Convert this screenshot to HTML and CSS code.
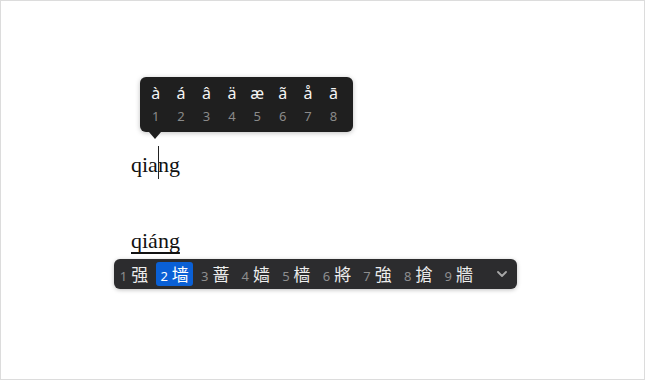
FILE: index.html
```html
<!DOCTYPE html>
<html lang="zh">
<head>
   <meta charset="UTF-8">
   <meta name="viewport" content="width=device-width, initial-scale=1">
   <link rel="stylesheet" href="styles.css">
   <title>Pinyin</title>
</head>

<body>

   <div class="janela">

      <!-- acentos -->
      <div class="acentos">
         <div class="tecla"><span class="letra">à</span><span class="num">1</span></div>
         <div class="tecla"><span class="letra">á</span><span class="num">2</span></div>
         <div class="tecla"><span class="letra">â</span><span class="num">3</span></div>
         <div class="tecla"><span class="letra">ä</span><span class="num">4</span></div>
         <div class="tecla"><span class="letra">æ</span><span class="num">5</span></div>
         <div class="tecla"><span class="letra">ã</span><span class="num">6</span></div>
         <div class="tecla"><span class="letra">å</span><span class="num">7</span></div>
         <div class="tecla"><span class="letra">ā</span><span class="num">8</span></div>
      </div>

      <div class="palavra">qia<span class="cursor"></span>ng</div>

      <div class="palavra marcada"><span>qiáng</span></div>

      <!-- candidatos -->
      <div class="candidatos">
         <div class="item"><span class="num">1</span><span class="hanzi">强</span></div>
         <div class="item ativo"><span class="num">2</span><span class="hanzi">墙</span></div>
         <div class="item"><span class="num">3</span><span class="hanzi">蔷</span></div>
         <div class="item"><span class="num">4</span><span class="hanzi">嫱</span></div>
         <div class="item"><span class="num">5</span><span class="hanzi">樯</span></div>
         <div class="item"><span class="num">6</span><span class="hanzi">將</span></div>
         <div class="item"><span class="num">7</span><span class="hanzi">強</span></div>
         <div class="item"><span class="num">8</span><span class="hanzi">搶</span></div>
         <div class="item"><span class="num">9</span><span class="hanzi">牆</span></div>

         <svg class="seta" width="10" height="6" viewBox="0 0 10 6">
            <path d="M1 1 L5 5 L9 1" fill="none" stroke="#a8a8a8" stroke-width="1.8" stroke-linecap="round" stroke-linejoin="round"/>
         </svg>
      </div>

   </div>

</body>
</html>
```

FILE: styles.css
```css
* {
   margin:0;
   padding:0;
   box-sizing:border-box;
}

body {
   background:#fff;
   width:645px;
   height:380px;
   font-family:"Noto Sans", "Liberation Sans", sans-serif;
}

.janela {
   height:380px;
   border:1px solid #dcdcdc;
   padding-top:76px;
   display:flex;
   flex-direction:column;
   align-items:flex-start;
}

.acentos {
   position:relative;
   display:flex;
   margin-left:138.5px;
   width:213px;
   height:55px;
   padding:6px 0 0 3.5px;
   background:#1f1f1f;
   border-radius:6px;
   box-shadow:0 1px 5px rgba(0,0,0,.25);
}

.acentos::after {
   content:"";
   position:absolute;
   left:9px;
   bottom:-7px;
   border-left:6px solid transparent;
   border-right:6px solid transparent;
   border-top:7px solid #1f1f1f;
}

.tecla {
   width:25.4px;
   display:flex;
   flex-direction:column;
   align-items:center;
}

.tecla .letra {
   color:#f4f4f4;
   font-size:16px;
   line-height:20px;
   height:20px;
}

.tecla .num {
   color:#8a8a8a;
   font-size:13px;
   line-height:16px;
   margin-top:5px;
}

.palavra {
   margin-left:130px;
   margin-top:16px;
   font-family:"Liberation Serif", serif;
   font-size:22px;
   line-height:34px;
   color:#111;
}

.cursor {
   position:relative;
}

.cursor::after {
   content:"";
   position:absolute;
   left:0;
   top:-6px;
   width:1px;
   height:33px;
   background:#222;
}

.palavra.marcada {
   margin-top:42px;
}

.palavra.marcada span {
   text-decoration:underline;
   text-decoration-thickness:1.5px;
   text-decoration-skip-ink:none;
   text-underline-offset:4px;
}

.candidatos {
   display:flex;
   align-items:center;
   gap:3.6px;
   margin-left:113px;
   margin-top:1px;
   width:403px;
   height:30px;
   padding:0 10px 0 1.5px;
   background:#2c2c2e;
   border-radius:6px;
   box-shadow:0 1px 4px rgba(0,0,0,.25);
}

.item {
   width:37px;
   height:24px;
   display:flex;
   align-items:baseline;
   justify-content:center;
   gap:4px;
   border-radius:3px;
   line-height:24px;
}

.item .num {
   color:#8e8e8e;
   font-size:13px;
}

.item .hanzi {
   color:#ededed;
   font-size:17px;
   font-family:"Noto Sans CJK SC", sans-serif;
}

.item.ativo {
   background:#0a60d6;
}

.item.ativo .num,
.item.ativo .hanzi {
   color:#fff;
}

.seta {
   margin-left:auto;
}
```
